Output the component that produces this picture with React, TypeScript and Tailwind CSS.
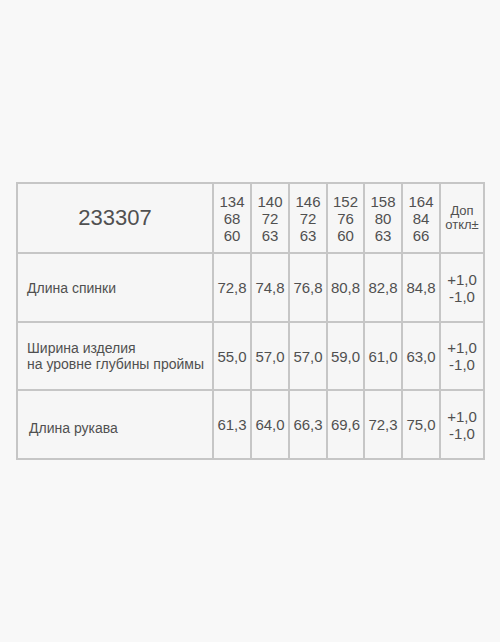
const sizes = [
  ["134", "68", "60"],
  ["140", "72", "63"],
  ["146", "72", "63"],
  ["152", "76", "60"],
  ["158", "80", "63"],
  ["164", "84", "66"],
];

const rows = [
  { label: ["Длина спинки"], values: ["72,8", "74,8", "76,8", "80,8", "82,8", "84,8"] },
  {
    label: ["Ширина изделия", "на уровне глубины проймы"],
    values: ["55,0", "57,0", "57,0", "59,0", "61,0", "63,0"],
  },
  { label: ["Длина рукава"], values: ["61,3", "64,0", "66,3", "69,6", "72,3", "75,0"] },
];

const colWidths = ["w-[196px]", "w-[38px]", "w-[38px]", "w-[38px]", "w-[37px]", "w-[38px]", "w-[38px]", "w-[44px]"];

export default function App() {
  return (
    <div className="min-h-[642px] w-[500px] bg-[#f8f8f8] pl-[16px] pt-[182px] text-[#505050] font-['Liberation_Sans',Arial,sans-serif]">
      <table className="table-fixed border-collapse border-2 border-[#c6c6c6] bg-[#f6f6f6]">
        <colgroup>
          {colWidths.map((w, i) => (
            <col key={i} className={w} />
          ))}
        </colgroup>
        <tbody>
          <tr className="h-[70px]">
            <td className="border-2 border-[#c6c6c6] text-center text-[22px] leading-none">233307</td>
            {sizes.map((s, i) => (
              <td key={i} className="border-2 border-[#c6c6c6] px-0 text-center text-[15px] leading-[17px]">
                {s.map((v) => (
                  <div key={v + i}>{v}</div>
                ))}
              </td>
            ))}
            <td className="border-2 border-[#c6c6c6] text-center text-[13px] leading-[14px]">
              <div>Доп</div>
              <div>откл±</div>
            </td>
          </tr>
          {rows.map((r, ri) => (
            <tr key={ri} className={ri === 1 ? "h-[68px]" : "h-[69px]"}>
              <td className="border-2 border-[#c6c6c6] pl-[9px] text-[14px] leading-[16px]">
                <div className={ri === 2 ? "pt-[6px] pl-[2px]" : ""}>
                  {r.label.map((l) => (
                    <div key={l}>{l}</div>
                  ))}
                </div>
              </td>
              {r.values.map((v, i) => (
                <td key={i} className="whitespace-nowrap border-2 border-[#c6c6c6] px-0 text-center text-[15px] leading-[17px]">
                  {v}
                </td>
              ))}
              <td className="border-2 border-[#c6c6c6] text-center text-[15px] leading-[17px]">
                <div>+1,0</div>
                <div>-1,0</div>
              </td>
            </tr>
          ))}
        </tbody>
      </table>
    </div>
  );
}
